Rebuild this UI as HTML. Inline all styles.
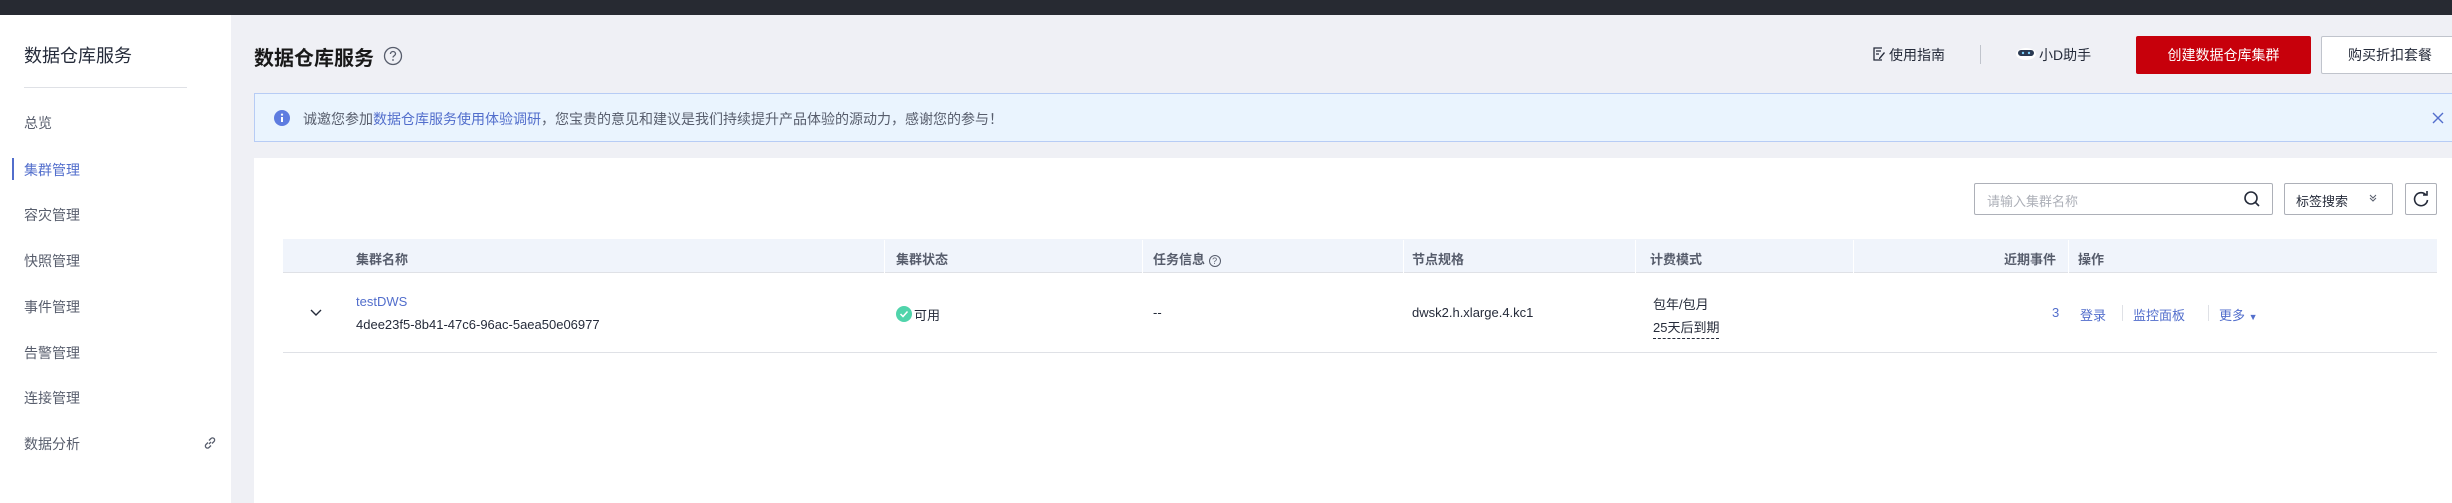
<!DOCTYPE html>
<html><head><meta charset="utf-8"><style>
*{margin:0;padding:0;box-sizing:border-box}
body{width:2452px;height:503px;overflow:hidden;background:#eff0f5;font-family:"Liberation Sans","Noto Sans CJK SC",sans-serif;color:#252b3a;position:relative}
.a{position:absolute;white-space:nowrap}
.top{left:0;top:0;width:2452px;height:15px;background:#272a32}
.side{left:0;top:15px;width:231px;height:488px;background:#fff}
.si{font-size:14px;color:#575d6c;left:24px}
.card{left:254px;top:158px;width:2198px;height:345px;background:#fff}
.th{font-size:13px;color:#575d6c;font-weight:bold;top:249px}
.td{font-size:13px;color:#252b3a}
.sep{top:240px;width:1px;height:33px;background:#fff}
.link{color:#526ecc}
</style></head><body>
<div class="a top"></div>
<div class="a side"></div>
<div class="a" style="left:24px;top:42px;font-size:18px;color:#252b3a">数据仓库服务</div>
<div class="a" style="left:24px;top:87px;width:163px;height:1px;background:#dfe1e6"></div>
<div class="a si" style="top:113px">总览</div>
<div class="a" style="left:12px;top:158px;width:2px;height:22px;background:#526ecc"></div>
<div class="a si" style="top:160px;color:#526ecc">集群管理</div>
<div class="a si" style="top:205px">容灾管理</div>
<div class="a si" style="top:251px">快照管理</div>
<div class="a si" style="top:297px">事件管理</div>
<div class="a si" style="top:343px">告警管理</div>
<div class="a si" style="top:388px">连接管理</div>
<div class="a si" style="top:434px">数据分析</div>
<svg class="a" style="left:203px;top:436px" width="14" height="14" viewBox="0 0 14 14"><path d="M6 8l2-2M5 6.5l-2 2a2 2 0 003 3l2-2M9 7.5l2-2a2 2 0 00-3-3l-2 2" stroke="#575d6c" stroke-width="1.3" fill="none"/></svg>

<div class="a" style="left:254px;top:42px;font-size:20px;font-weight:bold;color:#191919">数据仓库服务</div>
<svg class="a" style="left:383px;top:46px" width="20" height="20" viewBox="0 0 20 20"><circle cx="10" cy="10" r="8.5" stroke="#575d6c" stroke-width="1.3" fill="none"/><path d="M7.5 8a2.5 2.5 0 115 0c0 1.5-2.5 1.8-2.5 3.5" stroke="#575d6c" stroke-width="1.3" fill="none"/><circle cx="10" cy="14" r=".9" fill="#575d6c"/></svg>

<svg class="a" style="left:1872px;top:47px" width="14" height="14" viewBox="0 0 14 14"><path d="M10 1H2v12h8M4 4h5M4 7h3" stroke="#252b3a" stroke-width="1.3" fill="none"/><path d="M7 11l5-6 1 1-5 6H7z" fill="#252b3a"/></svg>
<div class="a" style="left:1889px;top:45px;font-size:14px">使用指南</div>
<div class="a" style="left:1980px;top:45px;width:1px;height:19px;background:#c0c4cc"></div>
<svg class="a" style="left:2015px;top:45px" width="22" height="16" viewBox="0 0 22 16"><ellipse cx="11" cy="9" rx="10" ry="6" fill="#fff"/><rect x="3" y="5" width="16" height="6" rx="3" fill="#2b3a52"/><circle cx="8" cy="8" r="1.2" fill="#7fd3ff"/><circle cx="14" cy="8" r="1.2" fill="#7fd3ff"/></svg>
<div class="a" style="left:2039px;top:45px;font-size:14px">小D助手</div>
<div class="a" style="left:2136px;top:36px;width:175px;height:38px;background:#c7000b;border-radius:2px;color:#fff;font-size:14px;text-align:center;line-height:38px">创建数据仓库集群</div>
<div class="a" style="left:2321px;top:36px;width:150px;height:38px;background:#fff;border:1px solid #c0c4cc;border-radius:2px;font-size:14px;line-height:36px;padding-left:26px">购买折扣套餐</div>

<div class="a" style="left:254px;top:93px;width:2210px;height:49px;background:#eaf4fe;border:1px solid #b7ccf5"></div>
<svg class="a" style="left:274px;top:110px" width="16" height="16" viewBox="0 0 16 16"><circle cx="8" cy="8" r="8" fill="#5e7ce0"/><rect x="7" y="7" width="2" height="5" fill="#fff"/><circle cx="8" cy="4.6" r="1.1" fill="#fff"/></svg>
<div class="a" style="left:303px;top:109px;font-size:14px;color:#575d6c">诚邀您参加<span class="link">数据仓库服务使用体验调研</span>，您宝贵的意见和建议是我们持续提升产品体验的源动力，感谢您的参与！</div>
<svg class="a" style="left:2432px;top:112px" width="12" height="12" viewBox="0 0 12 12"><path d="M1 1l10 10M11 1L1 11" stroke="#526ecc" stroke-width="1.4"/></svg>

<div class="a card"></div>
<div class="a" style="left:1974px;top:183px;width:299px;height:32px;border:1px solid #adb0b8;border-radius:2px"></div>
<div class="a" style="left:1987px;top:191px;font-size:13px;color:#adb0b8">请输入集群名称</div>
<svg class="a" style="left:2243px;top:190px" width="18" height="18" viewBox="0 0 18 18"><circle cx="8" cy="8" r="6" stroke="#252b3a" stroke-width="1.6" fill="none"/><path d="M12.5 12.5L16 16" stroke="#252b3a" stroke-width="1.6"/></svg>
<div class="a" style="left:2284px;top:183px;width:109px;height:32px;border:1px solid #adb0b8;border-radius:2px"></div>
<div class="a" style="left:2296px;top:191px;font-size:13px">标签搜索</div>
<svg class="a" style="left:2368px;top:193px" width="10" height="10" viewBox="0 0 10 10"><path d="M2 2l3 3 3-3M2 5l3 3 3-3" stroke="#575d6c" stroke-width="1" fill="none"/></svg>
<div class="a" style="left:2405px;top:183px;width:32px;height:32px;border:1px solid #adb0b8;border-radius:2px"></div>
<svg class="a" style="left:2412px;top:190px" width="18" height="18" viewBox="0 0 18 18"><path d="M14 5A6.5 6.5 0 1015.5 10" stroke="#252b3a" stroke-width="1.6" fill="none"/><path d="M11 5h4V1" stroke="#252b3a" stroke-width="1.6" fill="none"/></svg>

<div class="a" style="left:283px;top:239px;width:2154px;height:34px;background:#f0f4fb;border-bottom:1px solid #dfe1e6"></div>
<div class="a sep" style="left:884px"></div><div class="a sep" style="left:1142px"></div><div class="a sep" style="left:1403px"></div><div class="a sep" style="left:1635px"></div><div class="a sep" style="left:1853px"></div><div class="a sep" style="left:2068px"></div>
<div class="a th" style="left:356px">集群名称</div>
<div class="a th" style="left:896px">集群状态</div>
<div class="a th" style="left:1153px">任务信息 <span style="display:inline-block;width:12px;height:12px;border:1px solid #575d6c;border-radius:50%;font-size:9px;line-height:10px;text-align:center;font-weight:normal">?</span></div>
<div class="a th" style="left:1412px">节点规格</div>
<div class="a th" style="left:1650px">计费模式</div>
<div class="a th" style="left:2004px">近期事件</div>
<div class="a th" style="left:2078px">操作</div>

<svg class="a" style="left:309px;top:308px" width="14" height="10" viewBox="0 0 14 10"><path d="M2 2l5 5 5-5" stroke="#252b3a" stroke-width="1.4" fill="none"/></svg>
<div class="a td link" style="left:356px;top:294px">testDWS</div>
<div class="a td" style="left:356px;top:317px">4dee23f5-8b41-47c6-96ac-5aea50e06977</div>
<svg class="a" style="left:896px;top:306px" width="16" height="16" viewBox="0 0 16 16"><circle cx="8" cy="8" r="8" fill="#50d4ab"/><path d="M4.5 8l2.5 2.5 4.5-5" stroke="#fff" stroke-width="1.5" fill="none"/></svg>
<div class="a td" style="left:914px;top:305px">可用</div>
<div class="a td" style="left:1153px;top:305px">--</div>
<div class="a td" style="left:1412px;top:305px">dwsk2.h.xlarge.4.kc1</div>
<div class="a td" style="left:1653px;top:294px">包年/包月</div>
<div class="a td" style="left:1653px;top:317px;border-bottom:1px dashed #252b3a;padding-bottom:2px">25天后到期</div>
<div class="a td link" style="left:2052px;top:305px">3</div>
<div class="a td link" style="left:2080px;top:305px">登录</div>
<div class="a" style="left:2122px;top:305px;width:1px;height:16px;background:#dfe1e6"></div>
<div class="a td link" style="left:2133px;top:305px">监控面板</div>
<div class="a" style="left:2208px;top:305px;width:1px;height:16px;background:#dfe1e6"></div>
<div class="a td link" style="left:2219px;top:305px">更多 <span style="font-size:9px">▼</span></div>
<div class="a" style="left:283px;top:352px;width:2154px;height:1px;background:#dfe1e6"></div>
</body></html>
